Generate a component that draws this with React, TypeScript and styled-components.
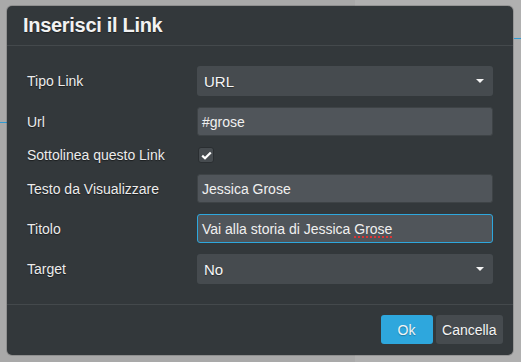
import styled, { createGlobalStyle } from "styled-components";

const GlobalStyle = createGlobalStyle`
  html, body {
    margin: 0;
    padding: 0;
    background: #a9a9a9;
    font-family: "Liberation Sans", Arial, sans-serif;
  }
`;

const Page = styled.div`
  width: 521px;
  height: 362px;
  box-sizing: border-box;
  padding: 6px 8px 7px 7px;
  background: linear-gradient(to right, #a9a9a9 0 355px, #b0b0b0 355px);
  position: relative;
  overflow: hidden;
`;

const BackLine = styled.div<{ $top: number; $left: number; $width: number }>`
  position: absolute;
  top: ${({ $top }) => $top}px;
  left: ${({ $left }) => $left}px;
  width: ${({ $width }) => $width}px;
  height: 1px;
  background: #2f9bd3;
`;

const Dialog = styled.div`
  position: relative;
  height: 100%;
  background: #33383b;
  border-radius: 5px;
  box-shadow: 0 0 0 1px rgba(0, 0, 0, 0.15);
  display: flex;
  flex-direction: column;
`;

const Header = styled.div`
  height: 39px;
  padding: 0 16px;
  display: flex;
  align-items: center;
  border-bottom: 1px solid #44494c;
`;

const Title = styled.h1`
  margin: 0;
  color: #f2f2f2;
  font-size: 20px;
  font-weight: bold;
  letter-spacing: -0.3px;
  text-shadow: 0 1px 1px rgba(0, 0, 0, 0.4);
`;

const Body = styled.div`
  flex: 1;
  padding: 20px 20px 20px 20px;
  display: grid;
  grid-template-columns: 170px 1fr;
  row-gap: 11px;
  align-items: center;
  border-bottom: 1px solid #44494c;
`;

const Label = styled.label`
  color: #ececec;
  font-size: 14px;
  text-shadow: 0 1px 1px rgba(0, 0, 0, 0.5);
`;

const Select = styled.div`
  height: 30px;
  box-sizing: border-box;
  background: #464b4f;
  border-radius: 3px;
  display: flex;
  align-items: center;
  justify-content: space-between;
  padding: 0 9px 0 7px;
  color: #f6f6f6;
  font-size: 15px;
  text-shadow: 0 1px 1px rgba(0, 0, 0, 0.4);
`;

const Caret = styled.span`
  width: 0;
  height: 0;
  border-left: 4px solid transparent;
  border-right: 4px solid transparent;
  border-top: 4px solid #f4f4f4;
`;

const Input = styled.div<{ $focus?: boolean }>`
  height: 29px;
  box-sizing: border-box;
  background: #50555a;
  border-radius: 3px;
  border: 1px solid ${({ $focus }) => ($focus ? "#2ea7dd" : "#3e4346")};
  display: flex;
  align-items: center;
  padding: 0 4px;
  color: #f0f0f0;
  font-size: 14px;
  white-space: pre;
`;

const Misspelled = styled.span`
  text-decoration: underline dotted #d33;
  text-decoration-thickness: 2px;
  text-underline-offset: 3px;
`;

const CheckBox = styled.span`
  width: 16px;
  height: 16px;
  box-sizing: border-box;
  border-radius: 3px;
  background: #474c50;
  border: 1px solid #2a2e31;
  display: flex;
  align-items: center;
  justify-content: center;
  margin-left: 1px;
`;

const Footer = styled.div`
  height: 50px;
  box-sizing: border-box;
  padding: 10px 10px 0;
  display: flex;
  justify-content: flex-end;
  gap: 3px;
  align-items: flex-start;
`;

const Button = styled.button<{ $primary?: boolean }>`
  height: 29px;
  border: none;
  border-radius: 3px;
  padding: 0 6.5px;
  min-width: 52px;
  font-family: inherit;
  font-size: 14px;
  color: #f4f4f4;
  background: ${({ $primary }) => ($primary ? "#2ea7dd" : "#464b4f")};
  text-shadow: 0 1px 1px rgba(0, 0, 0, 0.25);
`;

export default function App() {
  return (
    <>
      <GlobalStyle />
      <Page>
        <BackLine $top={122} $left={0} $width={7} />
        <BackLine $top={38} $left={514} $width={7} />
        <Dialog>
          <Header>
            <Title>Inserisci il Link</Title>
          </Header>
          <Body>
            <Label>Tipo Link</Label>
            <Select>
              URL <Caret />
            </Select>
            <Label>Url</Label>
            <Input>#grose</Input>
            <Label>Sottolinea questo Link</Label>
            <div>
              <CheckBox>
                <svg width="11" height="9" viewBox="0 0 11 9">
                  <path d="M1.2 4.6 L4 7.3 L9.8 1.4" fill="none" stroke="#fff" strokeWidth="2.2" />
                </svg>
              </CheckBox>
            </div>
            <Label>Testo da Visualizzare</Label>
            <Input>Jessica Grose</Input>
            <Label>Titolo</Label>
            <Input $focus>
              Vai alla storia di Jessica <Misspelled>Grose</Misspelled>
            </Input>
            <Label>Target</Label>
            <Select>
              No <Caret />
            </Select>
          </Body>
          <Footer>
            <Button $primary>Ok</Button>
            <Button>Cancella</Button>
          </Footer>
        </Dialog>
      </Page>
    </>
  );
}
